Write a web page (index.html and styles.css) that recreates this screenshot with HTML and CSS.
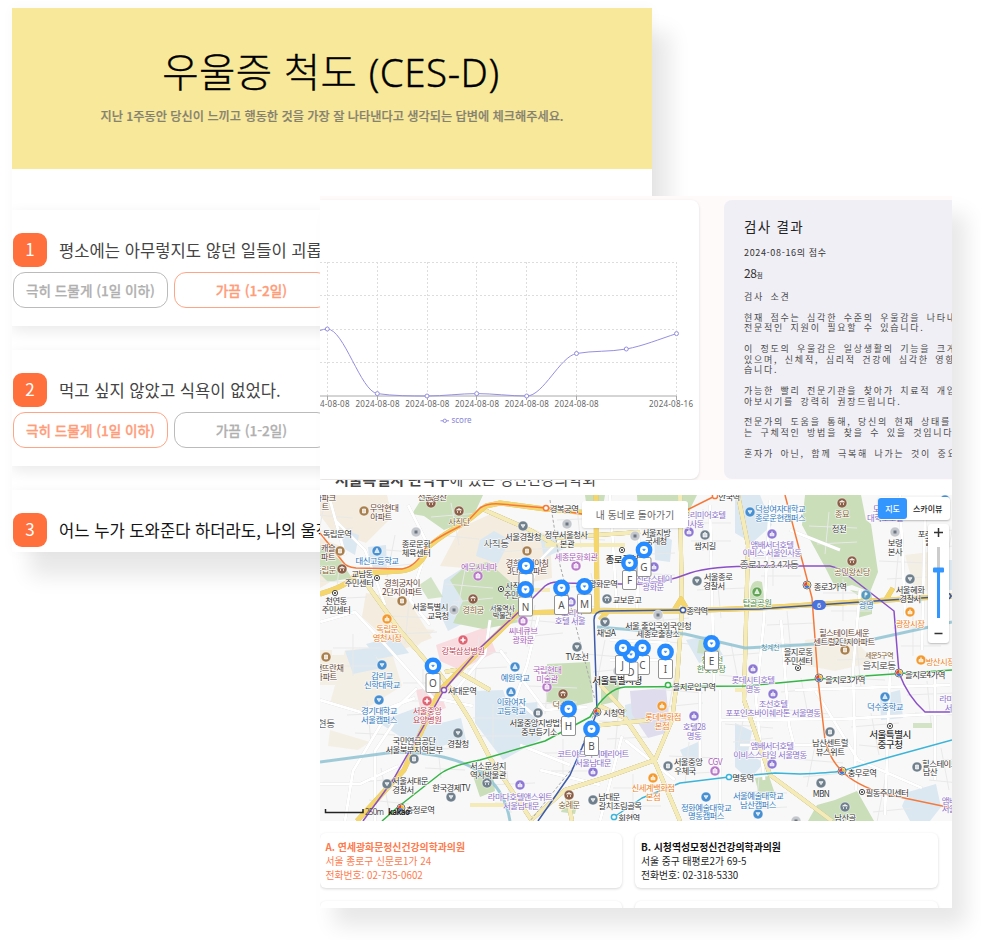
FILE: index.html
```html
<!DOCTYPE html>
<html lang="ko">
<head>
<meta charset="utf-8">
<title>우울증 척도 (CES-D)</title>
<link rel="stylesheet" href="styles.css">
</head>
<body>
<main class="canvas">
  <section class="window survey">
    <header class="survey-head">
      <h1>우울증 척도 <span>(CES-D)</span></h1>
      <p>지난 1주동안 당신이 느끼고 행동한 것을 가장 잘 나타낸다고 생각되는 답변에 체크해주세요.</p>
    </header>
    <div class="questions">
      <article class="question">
        <div class="ask"><b class="num">1</b><span>평소에는 아무렇지도 않던 일들이 괴롭고</span></div>
        <div class="answers"><button>극히 드물게 (1일 이하)</button><button class="on">가끔 (1-2일)</button></div>
      </article>
      <article class="question">
        <div class="ask"><b class="num">2</b><span>먹고 싶지 않았고 식욕이 없었다.</span></div>
        <div class="answers"><button class="on">극히 드물게 (1일 이하)</button><button>가끔 (1-2일)</button></div>
      </article>
      <article class="question last">
        <div class="ask"><b class="num">3</b><span>어느 누가 도와준다 하더라도, 나의 울적한</span></div>
      </article>
    </div>
  </section>

  <section class="window report">
    <div class="result-row">
      <div class="chart-card">
        <svg viewBox="320 200 379 279" width="379" height="279">
          <g class="grid">
            <path d="M320 262.5H676.5M320 295.5H676.5M320 329.5H676.5M320 362.5H676.5"/>
            <path d="M327.5 262V396M377.5 262V396M427.5 262V396M476.5 262V396M526.5 262V396M576.5 262V396M676.5 262V396"/>
          </g>
          <path class="axis" d="M320 396H676.5M327.5 396v4M377.5 396v4M427.5 396v4M476.5 396v4M526.5 396v4M576.5 396v4M676.5 396v4"/>
          <path class="line" d="M320 330.5Q323.500 329 327.300 329C344 329 360.600 391.300 377.300 393.600C393.900 395.900 410.400 396 427 396C443.500 396 460.200 393.600 476.700 393.600C493.300 393.600 510 396 526.700 396C543.300 396 559.900 356.500 576.500 353.500C593.100 350.500 609.700 352 626.300 349C643 346 659.800 339 676.500 333.600"/>
          <g class="dots"><circle cx="327.300" cy="329" r="2"/><circle cx="377.300" cy="393.600" r="2"/><circle cx="427" cy="396" r="2"/><circle cx="476.700" cy="393.600" r="2"/><circle cx="526.700" cy="396" r="2"/><circle cx="576.500" cy="353.500" r="2"/><circle cx="626.300" cy="349" r="2"/><circle cx="676.500" cy="333.600" r="2"/></g>
          <g class="ticks">
            <text x="327.500" y="406.500" textLength="44">2024-08-08</text><text x="377.500" y="406.500" textLength="44">2024-08-08</text><text x="427.300" y="406.500" textLength="44">2024-08-08</text><text x="477" y="406.500" textLength="44">2024-08-08</text><text x="526.800" y="406.500" textLength="44">2024-08-08</text><text x="576.600" y="406.500" textLength="44">2024-08-08</text><text x="671" y="406.500" textLength="44">2024-08-16</text>
          </g>
          <path class="line" d="M440.500 420.800h8.500"/><g class="dots"><circle cx="444.800" cy="420.800" r="1.700"/></g>
          <text class="legend" x="451.500" y="423.300" textLength="20">score</text>
        </svg>
      </div>
      <aside class="result-card">
        <h2>검사 결과</h2>
        <p class="when">2024-08-16의 점수</p>
        <p class="score">28<small>점</small></p>
        <p class="sub">검사 소견</p>
        <p class="opinion">현재 점수는 심각한 수준의 우울감을 나타내며,
전문적인 지원이 필요할 수 있습니다.

이 정도의 우울감은 일상생활의 기능을 크게
있으며, 신체적, 심리적 건강에 심각한 영향을
습니다.

가능한 빨리 전문기관을 찾아가 치료적 개입을
아보시기를 강력히 권장드립니다.

전문가의 도움을 통해, 당신의 현재 상태를
는 구체적인 방법을 찾을 수 있을 것입니다.

혼자가 아닌, 함께 극복해 나가는 것이 중요합</p>
      </aside>
    </div>

    <div class="clinic-title"><h3><b>서울특별시 관악구</b>에 있는 정신건강의학회</h3></div>

    <div class="map">
      <svg id="map" viewBox="320 495 632 326" width="632" height="326">
        <g fill="#f3ecdf">
          <path d="M335 495h52l5 22-26 26-35-13-11-15v-20zM320 538l20 8 4 28-24 14zM460 528l35-16 55 24 2 42-40 8-47-18-25-2zM366 593l42 7 24 38-33 13-37-34z"/>
          <path d="M345 650l45-4 12 40-40 25-32-8zM320 655h25l-10 30h-15zM385 625l50 5-22 20zM320 650h12v20h-12zM805 640l45-6 25 28-40 9-32-6zM905 555l40-5 7 30-36 15zM330 730l40 12-12 8-30-4z" opacity=".75"/>
        </g>
        <g fill="#dbe8f1">
          <path d="M345 530l14 5-4 20-14-8zM368 547l18-2 1 23-17 1zM480 540l14-9 16 9-12 24-22-8zM444 580l22-14 6 35-20 13-12-8zM436 605l20-7 8 25-16 8zM366 644l30-8 13 17-31 6zM735 495h25l12 30-20 18-17-10zM654 530l18 10-2 22-15-2zM686 640l25-5 12 20-24 8zM475 691l28-1 5 15 29-3 4 37-38 21-28-37zM378 722l46-17 8 28-25 8zM421 728l40-10 5 22-41 10zM735 723l17 8-4 22 16 10-15 17-14-13zM908 792l28-8 5 23-11 14h-20l-8-15zM624 650l20 2 2 15-20 2zM625 705l19-5 4 21-22 4zM880 695l20-5 3 28-22 2zM345 651l26-3 11 20-29 6zM680 750l18-8 5 20-14 9zM540 536l18-6 8 18-22 10zM940 560h12v30h-12z"/>
          <path d="M630 691l36-3 4 44-22 6-16-24z" fill="#dfdced"/>
          <path d="M436 645l50-18 10 25-36 18-20-9zM416 690l22-4 8 22-24 8z" fill="#f8dce0"/>
        </g>
        <g fill="#c9deb9">
          <path d="M424 495h59l-11 24-28 11-20-14-12-2zM450 580l16-14 22-4 34 30-2 30-37 7-30-6 10-22zM547 664l43-2 3 40-18 4-29-4zM601 680l19 2-2 19-17 4zM585 495h20l-3 17-15-3zM637 495h60l-7 14-52 2z"/>
          <path d="M805 495h56l5 25 5 4 7 48-8 20-18-7-16 4-10-20-24-44zM850 590l22 4v20l-15 4 2-22zM750 590q2-12 12-8l3 22-15 5zM817 805l18-5 22-9 17 30h-66zM320 545l20 15 12 18-24 4-8-8zM472 773l20-6 3 24-15 6zM755 778l14-2 6 18-15 5zM566 799l12 2-3 13-14-2z"/>
          <path d="M913 723h19v5h-19zM699 640l22 1-2 14-22-2zM419 585l12-8 12 20-15 2z" opacity=".8"/>
        </g>
        <g id="streets"></g>
        <g class="streets">
          <path d="M320 622l35-10 35 38 43 48 40 8M345 821l8-50 30-50 34-33M320 700l50 15 45-17M375 821v-70l20-30M320 784h40l38-18M408 505l20 40-18 55 20 25M335 520l30 30 20 55M490 620l-5 34-30 37M500 650l45 60 42-3M540 610l-13 55-12 34 30 25M610 495l7 115M640 511l-3 99M710 505l4 180M770 500l-6 120-8 80 8 80M781 620l8 105 5 20M720 720l120-1 112-6M795 690l155-5M860 590l-7 80 3 120M900 495l5 120M925 510l-3 140M815 690l43 70 64 28M610 640l60 3M610 660h60M700 690v75M720 690v130M740 745h100M625 740l50 40M540 770l60 15M520 745l50 20M600 821l22-85M890 670l-5 145M935 670v110M840 550l-50-20M760 550h40M330 500l15 55M570 530l-30 30-15 40"/>
        </g>
        <g class="road">
          <path d="M480 508L530 530 555 545M360 575L398 628 427 662M432 664L448 685 470 720 490 758 532 821M550 590H520M545 545H625M555 538L640 532M680 495L682 610 677 680 672 720 655 760 610 776 565 790 530 821M598 705L625 718 655 762 680 821M738 495L748 545 744 700 770 775 800 797 832 821M745 690H735M592 726L650 720M566 790L572 821M445 672L455 670 490 690M470 805H530M625 712L596 680"/>
        </g>
        <path class="road major" d="M320 594Q350 585 356 574L400 571Q422 569 428 547 445 533 466 522L486 506 500 503 545 509 590 513H690M357 821L404 770 440 690 518 613 597 611H680L760 608 952 596M596 495L597 611M885 601L893 588M600 620L608 611M673 612L681 599 688 611"/>
        <path class="stream" d="M320 762L395 752Q450 752 482 773 505 790 510 821M597 627L685 634 745 648 800 645 870 640 952 622"/>
        <path class="rail" d="M550 500L560 565 595 700M595 711L575 765 530 821"/>
        <g class="metro">
          <path stroke="#f5793a" d="M320 533L343 562Q346 567 356 568L402 569Q416 567 426 547 437 537 465 524L480 508Q488 503 500 504L546 508 582 514 687 510 715 496M785 495L812 598 818 679 825 740Q830 760 842 771 855 785 885 794L952 808"/>
          <path stroke="#8b50c8" d="M363 821L393 780 444 690 480 648 524 607 545 586Q553 580 565 583L600 584H640Q665 583 690 573 710 566 760 566H830Q840 568 849 576L894 611 899 673Q908 697 925 712L952 712"/>
          <path stroke="#3d5ba8" d="M538 821L570 775 592 725 597 712 594 620Q594 611 604 611L683 610 760 609 890 600 952 596"/>
          <path stroke="#35b447" d="M382 821L398 807 440 774Q450 766 480 760L545 741 590 717Q607 688 625 687L745 686 820 679 952 670"/>
          <path stroke="#3cb4d8" d="M614 817L642 798 680 783 729 777 775 773 800 774Q830 773 842 771L890 757 952 740"/>
        </g>
        <g id="stations"></g>
        <g id="icons"></g>
        <g id="labels"></g>
        <g><rect x="812" y="600" width="14" height="10" rx="5" fill="#4c72dc"/><text class="route" x="819" y="607.500">6</text></g>
        <g id="pins"></g>
        <path class="scale" d="M325.500 809v3.500h37.500V809"/>
        <text class="scale-text" x="365" y="815" textLength="19">250m</text>
        <text class="brand" x="388" y="814.500" textLength="22">kakao</text>
      </svg>
      <button class="home">내 동네로 돌아가기</button>
      <div class="map-type"><b>지도</b><span>스카이뷰</span></div>
      <div class="zoomer"><svg width="21" height="119" viewBox="0 0 21 119"><path d="M6 8.500h9M10.500 4v9M6.500 109.500h8" stroke="#333" stroke-width="1.500"/><path d="M10.500 23v23" stroke="#ccc" stroke-width="3"/><path d="M10.500 46v48" stroke="#3396ff" stroke-width="3"/><rect x="5" y="43.500" width="11" height="5" rx="1" fill="#3396ff"/></svg></div>
    </div>

    <div class="places">
      <article class="place active"><h4>A. 연세광화문정신건강의학과의원</h4><p>서울 종로구 신문로1가 24</p><p>전화번호: 02-735-0602</p></article>
      <article class="place"><h4>B. 시청역성모정신건강의학과의원</h4><p>서울 중구 태평로2가 69-5</p><p>전화번호: 02-318-5330</p></article>
      <article class="place"></article>
      <article class="place"></article>
    </div>
  </section>
</main>
<script src="map.js"></script>
</body>
</html>
```
FILE: styles.css
```css
* { box-sizing: border-box; }
body { margin: 0; background: #fff; font-family: "Noto Sans CJK KR", sans-serif; color: #222; }
h1, h2, h3, h4, p { margin: 0; font-weight: 400; }
button { font-family: inherit; padding: 0; background: #fff; }
.canvas { position: relative; width: 981px; height: 940px; overflow: hidden; }
.window { position: absolute; background: #fff; }
.survey { left: 12px; top: 8px; width: 640px; height: 544px; box-shadow: 18px 24px 20px rgba(0,0,0,.095), 0 0 12px rgba(0,0,0,.03); }
.report { left: 320px; top: 196px; width: 632px; height: 712px; box-shadow: 14px 18px 20px rgba(0,0,0,.095); }

.survey-head { height: 161px; background: #f8e899; text-align: center; padding-top: 34px; }
.survey-head h1 { font-size: 39.5px; line-height: 56px; font-weight: 300; color: #000; white-space: nowrap; letter-spacing: .35px; margin-left: -2px; -webkit-text-stroke: .35px #000; }
.survey-head h1 span { font-family: "Noto Sans", sans-serif; font-weight: 300; font-size: 38.5px; letter-spacing: .5px; }
.survey-head p { font-size: 12.2px; line-height: 18px; font-weight: 500; color: #858170; margin-top: 7px; white-space: nowrap; -webkit-text-stroke: .2px #858170; }
.questions { height: 383px; padding-top: 41px; overflow: hidden; display: flex; flex-direction: column; gap: 24px; }
.question { height: 116px; flex: none; padding: 23px 1px 0; background: #fff; box-shadow: 0 5px 14px rgba(0,0,0,.085); }
.ask { display: flex; align-items: center; gap: 12px; height: 34px; font-size: 16.6px; color: #444; white-space: nowrap; }
.last .ask { color: #151515; }
.num { width: 34px; height: 34px; border-radius: 9px; background: #ff703c; color: #fff; font-size: 17px; line-height: 32px; text-align: center; font-weight: 400; }
.answers { display: flex; gap: 6px; margin-top: 5px; }
.answers button { width: 155px; height: 36px; border: 1.5px solid #bbb; border-radius: 12px; color: #b0b0b0; font-size: 13.6px; font-weight: 500; -webkit-text-stroke: .25px #b0b0b0; }
.answers .on { border-color: #ffa586; color: #ff9c7a; -webkit-text-stroke: .3px #ff9c7a; }

.result-row { display: flex; gap: 25px; height: 284px; padding-top: 4px; background: #fefafa; overflow: hidden; }
.chart-card { width: 379px; height: 279px; flex: none; background: #fff; border-radius: 0 8px 8px 0; box-shadow: 0 1px 3px rgba(0,0,0,.13); }
.chart-card svg, .map svg { display: block; }
.grid path { stroke: #ddd; stroke-dasharray: 2 2; fill: none; }
.axis { stroke: #aaa; fill: none; }
.line { stroke: #958fe0; fill: none; stroke-width: 1; }
.dots circle { fill: #fff; stroke: #958fe0; stroke-width: 1; }
.ticks text { font: 8px "Noto Sans", sans-serif; fill: #666; text-anchor: middle; }
.legend { font: 8px "Noto Sans", sans-serif; fill: #8884d8; }
.result-card { width: 228px; height: 279px; flex: none; background: #f0eff5; border-radius: 8px 0 0 8px; padding: 17px 0 0 20px; overflow: hidden; white-space: nowrap; color: #4c4c4c; }
.result-card h2 { font-size: 13.5px; line-height: 18px; letter-spacing: 1.3px; color: #222; }
.when { font-size: 9px; line-height: 12px; letter-spacing: .65px; color: #333; margin-top: 12px; }
.score { font-size: 12px; line-height: 14px; letter-spacing: -.3px; color: #333; margin-top: 7px; }
.score small { font-size: 6.5px; }
.sub, .opinion { font-size: 9px; letter-spacing: 1.75px; word-spacing: 2.2px; line-height: 10.45px; }
.sub { margin-top: 10px; }
.opinion { white-space: pre; margin-top: 10.5px; }

.clinic-title { height: 15px; overflow: hidden; padding-left: 15px; }
.clinic-title h3 { font-size: 15px; line-height: 20px; margin-top: -11px; color: #444; white-space: nowrap; }
.map { position: relative; height: 326px; background: #f8f8f8; overflow: hidden; }
.home { position: absolute; left: 262px; top: 6px; width: 106px; height: 27px; border: 0; border-radius: 3px; font-size: 9.8px; color: #666; letter-spacing: .1px; box-shadow: 0 1px 2px rgba(0,0,0,.12); }
.map-type { position: absolute; left: 558px; top: 2px; width: 72px; height: 23px; display: flex; align-items: center; background: #fff; border-radius: 3px; box-shadow: 0 1px 2px rgba(0,0,0,.25); font-size: 8px; white-space: nowrap; }
.map-type b { width: 29px; height: 21px; line-height: 21px; text-align: center; background: #3396ff; color: #fff; border-radius: 3px; margin-right: 6px; font-weight: 500; }
.map-type span { font-weight: 500; }
.zoomer { position: absolute; left: 608px; top: 29px; height: 119px; background: #fff; border-radius: 3px; box-shadow: 0 1px 2px rgba(0,0,0,.25); }
.streets path { fill: none; stroke: #fff; stroke-width: 3; filter: drop-shadow(0 0 .5px #c8c8c8); }
#streets path { fill: none; stroke: #e9e9e9; stroke-width: 1; }
.road path, .road { fill: none; stroke: #f4ebb8; stroke-width: 4; stroke-linejoin: round; filter: drop-shadow(0 0 .3px #c9bb80); }
.major { stroke: #f4d66c; stroke-width: 5; }
.stream { fill: none; stroke: #8fc3d3; stroke-width: 3; opacity: .85; }
.rail { fill: none; stroke: #aaa; stroke-dasharray: 3 2; }
.metro path { fill: none; stroke-width: 1.5; stroke-linejoin: round; }
#labels text { font-size: 8.4px; font-weight: 400; text-anchor: middle; dominant-baseline: central; paint-order: stroke; stroke: #fff; stroke-width: 1.2px; stroke-linejoin: round; letter-spacing: -.55px; }
#labels .area { font-size: 9.6px; }
#labels .dark { font-size: 9.6px; font-weight: 500; }
#labels .small { font-size: 7.3px; }
.route { fill: #fff; font: 7px "Noto Sans", sans-serif; text-anchor: middle; }
.pin-letter { font: 10px "Noto Sans", sans-serif; fill: #555; text-anchor: middle; }
.scale { fill: none; stroke: #222; stroke-width: 1.5; }
.scale-text { font: 8px "Noto Sans", sans-serif; fill: #555; }
.brand { font: 700 8px "Noto Sans", sans-serif; fill: #222; }

.places { height: 87px; overflow: hidden; padding: 12px 14px 0 0; display: grid; grid-template-columns: 302px 303px; grid-auto-rows: 55px; gap: 13px; }
.place { border-radius: 6px; background: #fff; padding: 7px 6px; box-shadow: 0 1px 3px rgba(0,0,0,.16); font-size: 9.8px; line-height: 14px; white-space: nowrap; }
.place:first-child, .place:nth-child(3) { padding-left: 5.5px; }
.place h4 { font-size: 9.9px; font-weight: 700; color: #111; }
.active, .active h4 { color: #ff7a4c; }
```
FILE: map.js
```js
const NS = 'http://www.w3.org/2000/svg';
const el = (parent, tag, attrs, text) => {
  const n = document.createElementNS(NS, tag);
  for (const k in attrs) n.setAttribute(k, attrs[k]);
  if (text) n.textContent = text;
  document.getElementById(parent).appendChild(n);
  return n;
};
const K = '#333', B = '#2f78bd', P = '#8a6fc9', M = '#a860b8', W = '#5f4030', O = '#ee8022', G = '#4c8a3f', R = '#c04555', T = '#80602f';

// fine street mesh
for (let i = 0; i < 46; i++) {
  const x = 325 + i * 14, y = 500 + (i * 67) % 300, s = (i % 5) * 4 - 8;
  el('streets', 'path', { d: `M${x} ${y}l${s} 42M${x - 20} ${y + 14}l48 ${-s / 2}M${x - 12} ${y + 32}l40 ${s / 2}` });
}

// text, centre x, centre y, colour, class
const labels = [
  ['아파크', 325, 497, W], ['트', 325, 506, W], ['무악현대', 384, 507, W], ['아파트', 381, 516, W], ['선운경찬', 432, 496, W], ['사직단', 459, 521, T],
  ['독립문역', 337, 533, K], ['종로문화', 416, 543, K], ['체육센터', 416, 552, K], ['대신고등학교', 377, 560, B], ['캐슬', 328, 547, W], ['파트', 328, 556, W], ['독립문', 325, 569, T],
  ['사직동', 496, 543, '#666', 'area'], ['교남동', 362, 573, K], ['주민센터', 359, 582, K], ['경희궁자이', 402, 582, W], ['2단지아파트', 402, 591, W],
  ['에무시네마', 479, 566, M], ['천연동', 336, 600, K], ['주민센터', 336, 609, K], ['독립문', 387, 628, O], ['영천시장', 387, 637, O],
  ['서울특별시', 430, 606, K], ['교육청', 438, 615, K], ['경희궁', 473, 609, T], ['서울역사', 502, 608, K, 'small'], ['박물관', 502, 615, K, 'small'],
  ['서울경찰청', 523, 536, K], ['정부서울청사', 566, 534, K], ['본관', 567, 543, K], ['경복궁역', 564, 508, K], ['세종문화회관', 576, 556, M], ['경희궁의아침', 527, 562, W], ['3단지아파트', 527, 570, W],
  ['사직동', 516, 585, K], ['주민센터', 518, 594, K], ['씨네큐브', 523, 630, M], ['광화문', 523, 639, M], ['광화문역', 603, 583, K], ['코리안', 572, 612, P], ['호텔 서울', 570, 620, P],
  ['교보문고', 627, 599, K], ['서울지방', 656, 532, K], ['국세청', 656, 540, K], ['종로구청', 622, 559, K, 'dark'], ['신라스테이', 654, 578, P], ['광화문', 653, 586, P],
  ['프리미어호텔', 704, 514, P], ['인사동', 693, 523, P], ['쌈지길', 705, 545, K], ['안국역', 729, 496, K], ['서울종로', 718, 576, K], ['경찰서', 714, 585, K], ['종각역', 697, 610, K],
  ['채널A', 606, 632, K], ['서울 출입국외국인청', 658, 625, K], ['세종로출장소', 658, 633, K], ['덕성여자대학교', 780, 508, B], ['종로운현캠퍼스', 780, 517, B], ['종묘', 842, 513, T], ['정전', 839, 528, K],
  ['앰배서더호텔', 772, 544, P], ['이비스 서울인사동', 772, 552, P], ['종로1.2.3.4가동', 769, 564, '#666', 'area'], ['공민왕신당', 852, 571, T], ['종로3가역', 830, 586, K], ['탑골공원', 757, 602, G], ['광명', 866, 604, B],
  ['보령', 895, 542, K], ['본사', 895, 551, K], ['도화', 880, 508, P], ['대학로호텔', 885, 517, P], ['포레', 925, 533, K], ['힐', 928, 541, K], ['서울혜화', 910, 589, K], ['경찰서', 910, 598, K], ['광장시장', 910, 623, O],
  ['힐스테이트세운', 844, 632, W], ['센트럴2단지아파트', 844, 641, W], ['청계천', 770, 647, '#3a8aa5', 'small'], ['을지로동', 798, 651, K], ['주민센터', 798, 660, K],
  ['강북삼성병원', 463, 650, R], ['현뜨란채', 329, 667, W], ['아파트', 326, 676, W], ['감리교', 382, 675, B], ['신학대학교', 382, 684, B], ['서대문역', 462, 690, K], ['경기대학교', 379, 710, B], ['서울캠퍼스', 379, 719, B],
  ['서울중앙', 427, 710, R], ['요양병원', 427, 719, R], ['예원학교', 515, 677, B], ['이화여자', 511, 701, B], ['고등학교', 511, 710, B], ['아현동', 322, 723, '#666', 'area'], ['국민연금공단', 414, 740, K], ['서울북부지역본부', 414, 749, K], ['경찰청', 458, 743, K],
  ['서울중앙지방법원', 538, 722, K], ['중부등기소', 539, 731, K], ['서소문성지', 488, 765, K], ['역사박물관', 488, 774, K], ['서울서대문', 410, 780, K], ['경찰서', 403, 789, K], ['한국경제TV', 451, 787, K], ['충정로역', 420, 809, K],
  ['라마다호텔앤스위트', 520, 796, P], ['서울남대문', 521, 805, P], ['TV조선', 577, 656, K], ['국립현대', 547, 669, M], ['미술관', 547, 678, M], ['덕수궁', 563, 704, T], ['서울특별시청', 617, 680, K, 'dark'], ['시청역', 614, 712, K],
  ['코트야드바이메리어트', 593, 753, P], ['서울남대문', 593, 762, P], ['숭례문', 569, 804, T], ['남대문', 609, 796, K], ['갈치조림골목', 620, 805, K], ['회현역', 629, 817, K], ['롯데백화점', 663, 716, O], ['본점', 662, 725, O], ['호텔28', 694, 726, P], ['명동', 694, 735, P],
  ['서울중앙', 688, 761, K], ['우체국', 685, 770, K], ['CGV', 715, 761, M], ['신세계백화점', 653, 787, O], ['본점', 653, 796, O], ['명동역', 743, 777, K], ['을지로입구역', 694, 686, K], ['정화예술대학교', 706, 807, B], ['명동캠퍼스', 706, 815, B], ['청계천', 712, 659, G], ['한빛광장', 711, 668, G],
  ['롯데시티호텔', 753, 679, P], ['명동', 753, 688, P], ['조선호텔', 773, 703, P], ['포포인츠바이쉐라톤 서울명동', 773, 712, P], ['앰배서더호텔', 772, 745, P], ['이비스스타일 서울명동', 770, 754, P], ['서울예술대학교', 758, 795, B], ['남산캠퍼스', 758, 804, B],
  ['을지로3가역', 845, 679, K], ['세운5구역', 879, 655, T, 'small'], ['을지로동', 879, 665, '#666', 'area'], ['을지로4가역', 925, 674, K], ['방산시장', 940, 661, O], ['덕수중학교', 885, 706, B], ['서울특별시', 890, 734, K, 'dark'], ['중구청', 890, 744, K, 'dark'],
  ['라마다', 950, 698, P], ['서울', 952, 707, P], ['남산센트럴', 830, 742, K], ['뷰스위트', 830, 751, K], ['힐스테이트', 940, 763, K], ['남산', 930, 771, K], ['충무로역', 862, 772, K], ['필동주민센터', 887, 792, K], ['MBN', 821, 793, K], ['남산골', 845, 817, K], ['앰배', 949, 800, P], ['서울', 949, 808, P]
];
labels.forEach(([t, x, y, c, cls]) => el('labels', 'text', { x, y, fill: c, class: cls || '' }, t));

// x, y, colour, glyph kind
const icons = [
  [364, 511, '#a87e4c', 'h'], [431, 503, '#8c6048', 'g'], [459, 511, '#8c6048', 'g'], [377, 551, '#478fd0', 't'], [340, 551, '#a87e4c', 'h'], [342, 569, '#8c6048', 'g'], [402, 601, '#a87e4c', 'h'], [478, 576, '#b878c8', 's'], [473, 599, '#8c6048', 'g'], [387, 619, '#f39a2e', 'b'], [463, 640, '#df6574', 'p'],
  [416, 532, '#aab0b8', 'd'], [454, 610, '#aab0b8', 'd'], [523, 526, '#6f7f8c', 'v'], [567, 524, '#aab0b8', 'd'], [527, 551, '#a87e4c', 'h'], [576, 566, '#b878c8', 's'], [523, 621, '#b878c8', 's'], [571, 602, '#8c78d4', 's'], [607, 599, '#6f7f8c', 'g'], [635, 536, '#aab0b8', 'd'], [689, 532, '#8c78d4', 'b'], [705, 535, '#6f7f8c', 's'], [654, 567, '#8c78d4', 'b'], [697, 581, '#6f7f8c', 'v'], [658, 615, '#aab0b8', 'd'], [605, 622, '#6f7f8c', 'v'], [577, 647, '#6f7f8c', 'v'],
  [750, 512, '#478fd0', 'v'], [842, 503, '#8c6048', 'g'], [772, 534, '#8c78d4', 'b'], [852, 561, '#8c6048', 'g'], [757, 592, '#64a555', 't'], [866, 595, '#5699be', 'P'], [895, 532, '#aab0b8', 'd'], [910, 579, '#6f7f8c', 'v'], [910, 612, '#f39a2e', 'b'], [845, 650, '#a87e4c', 'h'], [921, 660, '#f39a2e', 'b'],
  [326, 657, '#a87e4c', 'h'], [382, 665, '#478fd0', 'v'], [379, 700, '#478fd0', 'v'], [427, 701, '#df6574', 'p'], [515, 667, '#478fd0', 't'], [511, 692, '#478fd0', 't'], [458, 733, '#6f7f8c', 'v'], [414, 759, '#6f7f8c', 'h'], [387, 784, '#6f7f8c', 'v'], [451, 797, '#6f7f8c', 'v'], [487, 783, '#6f7f8c', 'g'], [520, 785, '#8c78d4', 'b'],
  [547, 687, '#b878c8', 's'], [563, 694, '#8c6048', 'g'], [538, 713, '#6f7f8c', 'h'], [618, 671, '#b59445', 'd'], [593, 772, '#8c78d4', 'b'], [569, 795, '#8c6048', 'g'], [593, 800, '#6f7f8c', 'v'], [662, 706, '#f39a2e', 'b'], [694, 716, '#8c78d4', 'b'], [668, 766, '#6f7f8c', 'h'], [715, 771, '#b878c8', 's'], [653, 778, '#f39a2e', 'b'], [706, 797, '#478fd0', 'v'], [753, 669, '#8c78d4', 'b'], [773, 694, '#8c78d4', 'b'], [772, 764, '#8c78d4', 'b'], [758, 814, '#478fd0', 'v'],
  [885, 697, '#478fd0', 't'], [830, 732, '#6f7f8c', 'h'], [917, 767, '#6f7f8c', 'h'], [821, 783, '#6f7f8c', 'v'], [845, 807, '#6f7f8c', 'g'], [796, 821, '#6f7f8c', 'd'], [945, 500, '#478fd0', 'v']
];
const glyphs = {
  h: 'M-1.500 2V-2H1.500V2Z', g: 'M-2.500-1L0-2.500 2.500-1ZM-1.500 0V2M1.500 0V2', t: 'M0-2.800L-2.200 1.500H2.200Z', s: 'M-2-1.500H2V2H-2ZM-1-2.500H1',
  b: 'M-2-.5H2V1.800H-2ZM-1-1.500Q0-3 1-1.500', p: 'M-2.500 0H2.500M0-2.500V2.500', v: 'M-2-1.300H2L0 1.700Z', d: 'M-1.500-1.500H1.500V1.500H-1.500Z', P: 'M-1 2.500V-2.200H.5Q2-1 .5 0H-1'
};
icons.forEach(([x, y, c, k]) => {
  el('icons', 'circle', { cx: x, cy: y, r: 5, fill: k === 'd' ? '#c4c8cd' : c, stroke: '#fff', 'stroke-width': .5 });
  el('icons', 'path', { d: glyphs[k], transform: `translate(${x} ${y})`, fill: k === 'd' ? '#6c7580' : k === 'p' ? 'none' : 'rgba(255,255,255,.75)', stroke: k === 'd' ? 'none' : '#fff', 'stroke-width': k === 'p' ? 1.6 : .7 });
});
[[377, 578], [335, 593], [501, 589], [622, 550], [798, 668], [890, 726], [862, 792]].forEach(([x, y]) => {
  el('icons', 'circle', { cx: x, cy: y, r: 2.6, fill: '#fff', stroke: K, 'stroke-width': .9 });
  el('icons', 'circle', { cx: x, cy: y, r: 1, fill: K });
});

[[546, 508, '#f5793a'], [715, 496, '#f5793a'], [683, 610, '#3d5ba8'], [444, 690, '#8b50c8'], [668, 685, '#35b447'], [614, 817, '#3cb4d8'], [729, 777, '#3cb4d8'], [948, 596, '#3d5ba8']].forEach(([x, y, c]) =>
  el('stations', 'circle', { cx: x, cy: y, r: 2.6, fill: '#fff', stroke: c, 'stroke-width': 1.5 }));
[[807, 585], [597, 712], [819, 678], [899, 673], [842, 771], [401, 808]].forEach(([x, y]) => {
  el('stations', 'circle', { cx: x, cy: y, r: 4, fill: '#fff', stroke: '#777', 'stroke-width': 1 });
  el('stations', 'path', { d: `M${x} ${y}V${y - 3}A3 3 0 0 1 ${x + 2.6} ${y + 1.5}Z`, fill: '#f2bd2d' });
  el('stations', 'path', { d: `M${x} ${y}L${x + 2.6} ${y + 1.5}A3 3 0 0 1 ${x - 2.6} ${y + 1.5}Z`, fill: '#3577dc' });
  el('stations', 'path', { d: `M${x} ${y}L${x - 2.6} ${y + 1.5}A3 3 0 0 1 ${x} ${y - 3}Z`, fill: '#e4453b' });
});

const tag = (x, y, t) => {
  el('pins', 'rect', { x: x - 7, y: y + 7.5, width: 14, height: 19, rx: 1.5, fill: '#fff', stroke: '#777', 'stroke-width': .8 });
  el('pins', 'text', { x, y: y + 21, class: 'pin-letter' }, t);
};
const pin = (x, y) => {
  el('pins', 'circle', { cx: x, cy: y, r: 8.4, fill: '#268bff' });
  el('pins', 'circle', { cx: x, cy: y, r: 4, fill: '#fff' });
  el('pins', 'path', { d: `M${x - 1.4} ${y - .8}h2.800l-1.400 1.800z`, fill: '#268bff', stroke: '#268bff', 'stroke-width': .5 });
};
const pins = [[526, 566, ''], [525.5, 589.5, 'N'], [561.5, 588, 'A'], [584.5, 586.5, 'M'], [644, 550, 'G'], [629.5, 563, 'F'], [631, 654.5, 'D'], [623, 648, 'J'], [642.5, 648, 'C'], [665.5, 652, 'I'], [711.5, 643.5, 'E'], [433, 666, 'O'], [568.5, 709, 'H'], [591.5, 729, 'B']];
pins.filter(p => p[2] !== 'J').forEach(p => tag(...p));
tag(631, 654.5, 'D');
tag(622.5, 648, 'J');
pins.forEach(([x, y]) => pin(x, y));
```
